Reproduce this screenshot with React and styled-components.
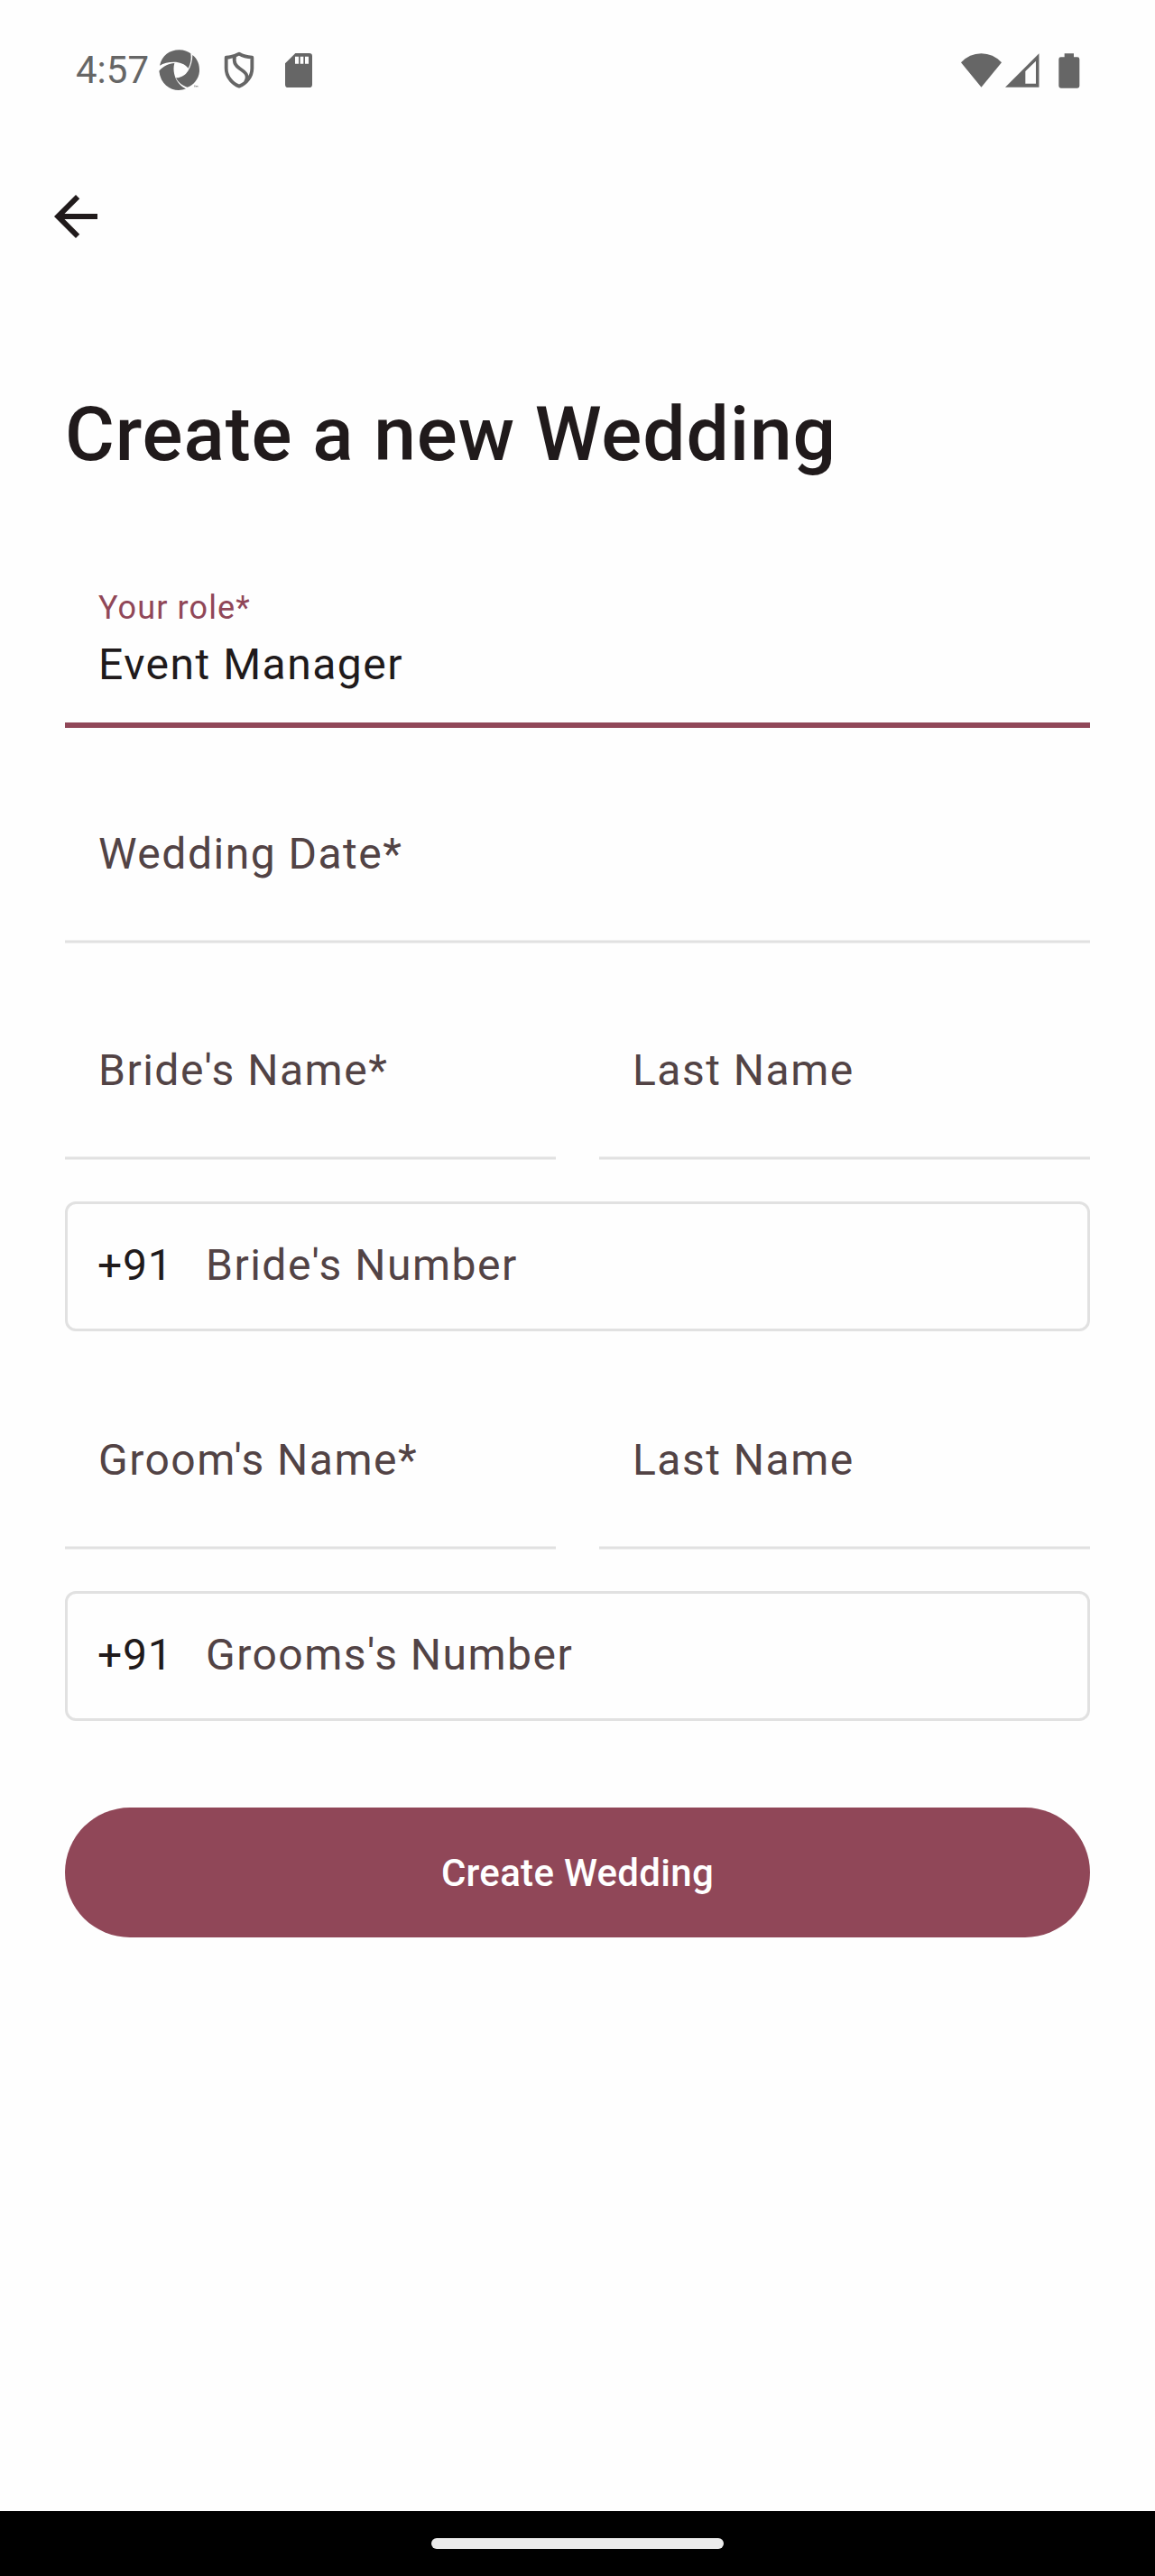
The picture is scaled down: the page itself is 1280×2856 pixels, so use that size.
import React from "react";
import styled, { createGlobalStyle } from "styled-components";

const Global = createGlobalStyle`
  body { margin: 0; background: #fefefe; }
  * { box-sizing: border-box; }
`;

const Screen = styled.div`
  width: 1280px;
  height: 2856px;
  display: flex;
  flex-direction: column;
  background: #fefefe;
  color: #201a1b;
  font-family: Roboto, "Noto Sans", sans-serif;
`;

const StatusBar = styled.header`
  height: 156px;
  display: flex;
  align-items: center;
  justify-content: space-between;
  padding: 0 83px 0 84px;
  color: #666;
`;

const StatusGroup = styled.div`
  display: flex;
  align-items: center;
`;

const Clock = styled.span`
  width: 92px;
  font-size: 42px;
  line-height: 48px;
`;

const Glyph = styled.svg`
  display: block;
  flex: none;
  width: ${(p) => p.$w}px;
  height: ${(p) => p.$h}px;
  margin-left: ${(p) => p.$gap || 0}px;
  fill: currentColor;
`;

const AppBar = styled.nav`
  height: 192px;
  padding: 48px;
`;

const BackButton = styled.button`
  display: block;
  padding: 0;
  border: 0;
  background: none;
  color: #201a1b;
`;

const Form = styled.main`
  flex: 1;
  display: flex;
  flex-direction: column;
  padding: 0 72px;
`;

const Title = styled.h1`
  margin: 80px 0 103px;
  font-size: 84px;
  line-height: 108px;
  font-weight: 500;
  letter-spacing: 0.9px;
  white-space: nowrap;
`;

const ActiveField = styled.div`
  height: 168px;
  padding: 21px 37px 0;
  border-bottom: 6px solid #904758;
`;

const FloatingLabel = styled.div`
  margin-top: -10px;
  color: #904758;
  font-size: 36px;
  line-height: 48px;
  letter-spacing: 1.125px;
`;

const Value = styled.div`
  margin-top: 3px;
  font-size: 48px;
  line-height: 72px;
  letter-spacing: 1.5px;
`;

const Row = styled.div`
  display: flex;
  gap: 48px;
  padding-top: ${(p) => p.$before || 0}px;
`;

const Field = styled.div`
  flex: 1;
  height: 239px;
  margin-bottom: ${(p) => p.$after || 1}px;
  padding: 104px 37px 0;
`;

const Placeholder = styled.div`
  color: #524345;
  font-size: 48px;
  line-height: 72px;
  letter-spacing: 1.5px;
  white-space: nowrap;
`;

const Underline = styled.div`
  height: 4px;
  margin: 59px -37px 0;
  background: #e1e1e1;
  border: solid #efefef;
  border-width: 1px 0;
`;

const PhoneField = styled.div`
  height: 144px;
  display: flex;
  align-items: center;
  padding: 0 33px 2px;
  border: 3px solid #e1e1e1;
  border-radius: 12px;
`;

const DialCode = styled.span`
  width: 120px;
  font-size: 48px;
  line-height: 72px;
  letter-spacing: 0.75px;
`;

const Submit = styled.button`
  height: 144px;
  margin-top: 96px;
  padding: 2px 0 0;
  border: 0;
  border-radius: 72px;
  background: #904758;
  color: #fff;
  font: 500 42px/60px Roboto, sans-serif;
  letter-spacing: 0.3px;
`;

const NavBar = styled.footer`
  height: 72px;
  display: flex;
  align-items: center;
  justify-content: center;
  background: #000;
`;

const Handle = styled.div`
  width: 324px;
  height: 12px;
  border-radius: 6px;
  background: #ebebeb;
`;

const ApertureIcon = () => (
  <Glyph $w={46} $h={46} viewBox="348 76 138 138">
    <path d="M351 129C358 96 384 77 416 77C432 77 445 82 454 89C457 106 454 124 446 138C434 123 417 117 398 117C380 117 363 121 351 129Z" />
    <path d="M460 94C478 108 484 128 483 148C481 174 463 195 443 201C427 197 412 184 405 170C426 169 438 158 445 147C455 132 460 113 460 94Z" />
    <path d="M349 147C362 132 381 122 400 121C395 139 398 157 404 171C411 187 424 200 438 206C404 220 355 203 349 147Z" />
    <path d="M465 196H470M467.500 196V201M472 201V196L474.500 199L477 196V201" fill="none" stroke="currentColor" strokeWidth="1.500" />
  </Glyph>
);

const ShieldIcon = () => (
  <Glyph $w={34} $h={42} $gap={26} viewBox="564 82 102 126">
    <g fill="none" stroke="currentColor" strokeLinejoin="round" strokeWidth="11.500">
      <path d="M615 90C603 97 588 101 572 102V138C572 165 591 189 615 198C639 189 658 165 658 138V102C642 101 627 97 615 90Z" />
      <path d="M600 98C596 121 604 129 617 139C636 152 649 162 636 184" />
    </g>
  </Glyph>
);

const SdCardIcon = () => (
  <Glyph $w={30} $h={38} $gap={34} viewBox="768 87 90 114">
    <path fillRule="evenodd" d="M802 87H848Q858 87 858 97V191Q858 201 848 201H778Q768 201 768 191V121ZM801 98V122H813V98ZM818 98V122H829V98ZM834 98V122H846V98Z" />
  </Glyph>
);

const WifiIcon = () => (
  <Glyph $w={45} $h={38} viewBox="75 85 135 114">
    <path d="M75 116Q103 86 142.500 86Q182 86 210 116L142.500 198Z" />
  </Glyph>
);

const SignalIcon = () => (
  <Glyph $w={38} $h={38} $gap={4} viewBox="222 86 114 114">
    <path fillRule="evenodd" d="M222 199.500L334.500 87V199.500ZM289 146V187.500H324V112Z" />
  </Glyph>
);

const BatteryIcon = () => (
  <Glyph $w={24} $h={39} $gap={21} viewBox="398 84 72 117">
    <path d="M418 85H449V97H461Q468 97 468 104V193Q468 200 461 200H406Q399 200 399 193V104Q399 97 406 97H418Z" />
  </Glyph>
);

const ArrowBackIcon = () => (
  <Glyph $w={72} $h={72} viewBox="0 0 24 24">
    <path d="M20 11H7.830l5.590-5.590L12 4l-8 8 8 8 1.410-1.410L7.830 13H20v-2z" />
  </Glyph>
);

const TextField = ({ label, after }) => (
  <Field $after={after}>
    <Placeholder>{label}</Placeholder>
    <Underline />
  </Field>
);

const PhoneInput = ({ label }) => (
  <PhoneField>
    <DialCode>+91</DialCode>
    <Placeholder>{label}</Placeholder>
  </PhoneField>
);

export default function App() {
  return (
    <>
      <Global />
      <Screen>
        <StatusBar>
          <StatusGroup>
            <Clock>4:57</Clock>
            <ApertureIcon />
            <ShieldIcon />
            <SdCardIcon />
          </StatusGroup>
          <StatusGroup>
            <WifiIcon />
            <SignalIcon />
            <BatteryIcon />
          </StatusGroup>
        </StatusBar>
        <AppBar>
          <BackButton aria-label="Back">
            <ArrowBackIcon />
          </BackButton>
        </AppBar>
        <Form>
          <Title>Create a new Wedding</Title>
          <ActiveField>
            <FloatingLabel>Your role*</FloatingLabel>
            <Value>Event Manager</Value>
          </ActiveField>
          <Row>
            <TextField label="Wedding Date*" />
          </Row>
          <Row>
            <TextField label="Bride's Name*" after={46} />
            <TextField label="Last Name" after={46} />
          </Row>
          <PhoneInput label="Bride's Number" />
          <Row $before={3}>
            <TextField label="Groom's Name*" after={46} />
            <TextField label="Last Name" after={46} />
          </Row>
          <PhoneInput label="Grooms's Number" />
          <Submit>Create Wedding</Submit>
        </Form>
        <NavBar>
          <Handle />
        </NavBar>
      </Screen>
    </>
  );
}
